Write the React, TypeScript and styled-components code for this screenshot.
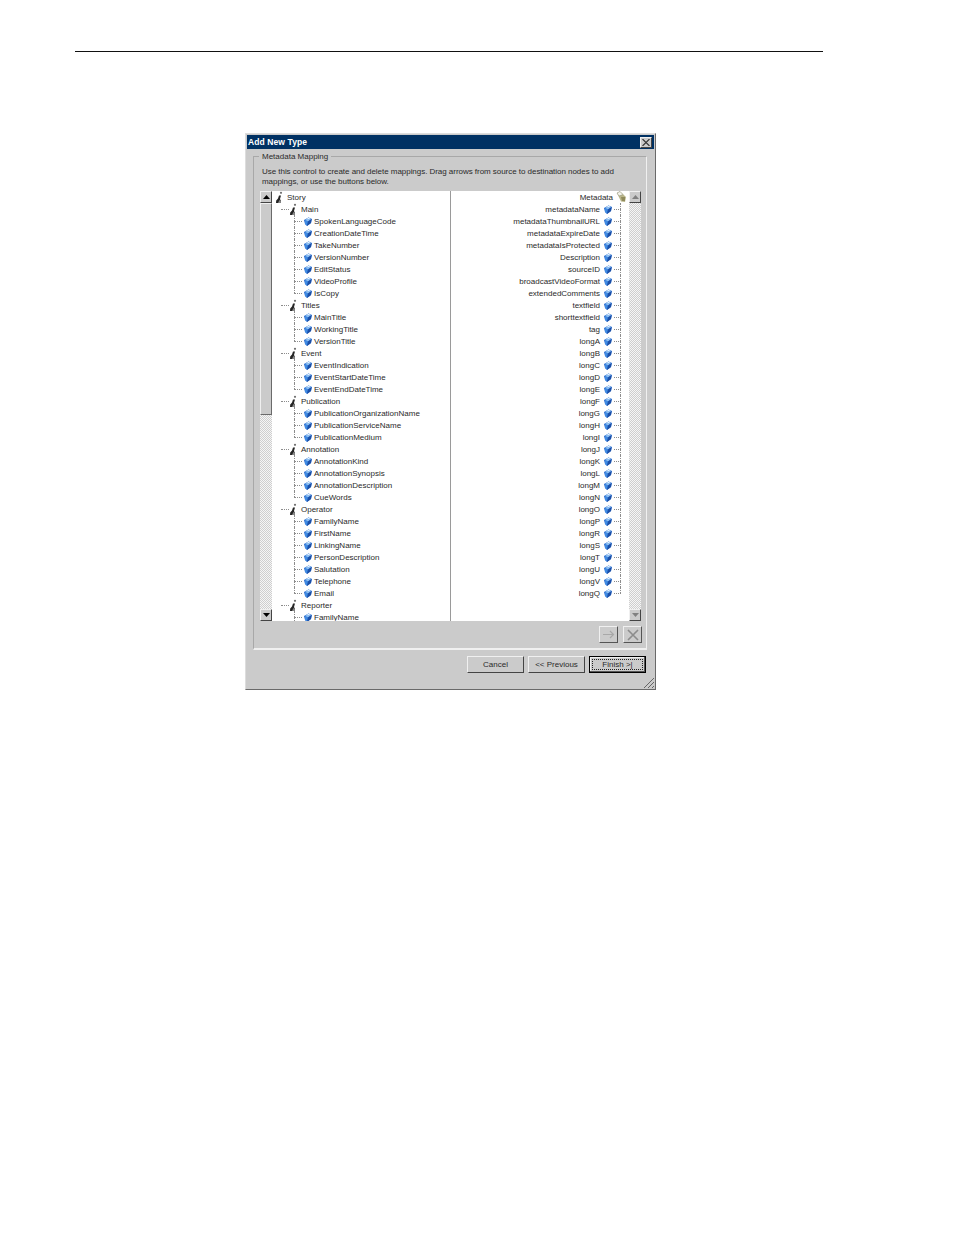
import styled, { createGlobalStyle } from "styled-components";

const GlobalStyle = createGlobalStyle`
  html, body {
    margin: 0;
    padding: 0;
    background: #ffffff;
  }
  body {
    font-family: "Liberation Sans", Arial, sans-serif;
  }
`;

type SourceNode = { label: string; kind: "root" | "group" | "leaf"; last?: boolean };

const group = (label: string, ...children: string[]): SourceNode[] => [
  { label, kind: "group" },
  ...children.map((c, i) => ({
    label: c,
    kind: "leaf" as const,
    last: i === children.length - 1,
  })),
];

const sourceNodes: SourceNode[] = [
  { label: "Story", kind: "root" },
  ...group(
    "Main",
    "SpokenLanguageCode",
    "CreationDateTime",
    "TakeNumber",
    "VersionNumber",
    "EditStatus",
    "VideoProfile",
    "IsCopy",
  ),
  ...group("Titles", "MainTitle", "WorkingTitle", "VersionTitle"),
  ...group("Event", "EventIndication", "EventStartDateTime", "EventEndDateTime"),
  ...group(
    "Publication",
    "PublicationOrganizationName",
    "PublicationServiceName",
    "PublicationMedium",
  ),
  ...group(
    "Annotation",
    "AnnotationKind",
    "AnnotationSynopsis",
    "AnnotationDescription",
    "CueWords",
  ),
  ...group(
    "Operator",
    "FamilyName",
    "FirstName",
    "LinkingName",
    "PersonDescription",
    "Salutation",
    "Telephone",
    "Email",
  ),
  { label: "Reporter", kind: "group" },
  { label: "FamilyName", kind: "leaf" },
];

const targetNodes = [
  "metadataName",
  "metadataThumbnailURL",
  "metadataExpireDate",
  "metadataIsProtected",
  "Description",
  "sourceID",
  "broadcastVideoFormat",
  "extendedComments",
  "textfield",
  "shorttextfield",
  "tag",
  "longA",
  "longB",
  "longC",
  "longD",
  "longE",
  "longF",
  "longG",
  "longH",
  "longI",
  "longJ",
  "longK",
  "longL",
  "longM",
  "longN",
  "longO",
  "longP",
  "longR",
  "longS",
  "longT",
  "longU",
  "longV",
  "longQ",
];

function GemIcon() {
  return (
    <GemSvg viewBox="0 0 8 9" width="8" height="9">
      <polygon points="4.5,0.5 8,2 7,6 3,9 1,7 0,3" fill="#2467cc" />
      <polygon points="4.5,0.5 7.5,2 4,4.5 1,3" fill="#8dbef0" />
      <polygon points="1,3 4,4.5 3,8.5 1,7" fill="#3f8ae2" />
      <polygon points="7,6 3,9 4,4.5 7.5,2" fill="#1c4fa6" />
      <rect x="3.5" y="1" width="2" height="1" fill="#eaf4ff" />
    </GemSvg>
  );
}

function PersonIcon() {
  return (
    <PersonSvg viewBox="0 0 9 13" width="9" height="13">
      <circle cx="6" cy="1.8" r="1.1" fill="#6f6f6f" />
      <path d="M4 4.5 L6 4.5 L5 8 L6 10 L5.5 12 L1 12 L1.2 9.5 L3 7.5 Z" fill="#262626" />
      <path d="M4.5 9 L6 10 L5.5 12 L3 12 Z" fill="#8a8a8a" />
    </PersonSvg>
  );
}

function TagIcon() {
  return (
    <TagSvg viewBox="0 0 11 12" width="11" height="12">
      <path d="M1 2 L4 0.5 L10 6 L9 11 L5 10.5 Z" fill="#b9b58a" />
      <path d="M1 2 L4 0.5 L7 3.5 L3 5 Z" fill="#f4f4ec" stroke="#8a8a70" strokeWidth="0.5" />
      <path d="M5 6 L9 6 L9 10 L6 10 Z" fill="#8f8a5c" />
    </TagSvg>
  );
}

function ArrowUp({ disabled }: { disabled?: boolean }) {
  return (
    <svg viewBox="0 0 7 4" width="7" height="4">
      <polygon points="3.5,0 7,4 0,4" fill={disabled ? "#808080" : "#000000"} />
    </svg>
  );
}

function ArrowDown({ disabled }: { disabled?: boolean }) {
  return (
    <svg viewBox="0 0 7 4" width="7" height="4">
      <polygon points="0,0 7,0 3.5,4" fill={disabled ? "#808080" : "#000000"} />
    </svg>
  );
}

export default function App() {
  return (
    <Page>
      <GlobalStyle />
      <HeaderRule />
      <Dialog>
        <TitleBar>
          <TitleText>Add New Type</TitleText>
          <CloseButton>
            <svg viewBox="0 0 8 7" width="8" height="7">
              <path d="M0.5 0 L7.5 7 M7.5 0 L0.5 7" stroke="#333" strokeWidth="1.1" />
            </svg>
          </CloseButton>
        </TitleBar>
        <GroupBox>
          <GroupLegend>Metadata Mapping</GroupLegend>
          <Description>
            Use this control to create and delete mappings. Drag arrows from source to
            destination nodes to add mappings, or use the buttons below.
          </Description>
          <MappingPanel>
            <ScrollBar>
              <ScrollButton>
                <ArrowUp />
              </ScrollButton>
              <ScrollThumb />
              <ScrollTrack />
              <ScrollButton>
                <ArrowDown />
              </ScrollButton>
            </ScrollBar>
            <SourcePane>
              {sourceNodes.map((node, i) => (
                <SourceRow key={i} $kind={node.kind}>
                  {node.kind === "group" && <GroupDash />}
                  {node.kind === "leaf" && <LeafBranch $last={node.last} />}
                  {node.kind === "leaf" ? <GemIcon /> : <PersonIcon />}
                  <NodeLabel $kind={node.kind}>{node.label}</NodeLabel>
                </SourceRow>
              ))}
            </SourcePane>
            <PaneDivider />
            <TargetPane>
              <TargetRootRow>
                <NodeLabel $kind="root">Metadata</NodeLabel>
                <TagIcon />
              </TargetRootRow>
              {targetNodes.map((name, i) => (
                <TargetRow key={name}>
                  <NodeLabel $kind="leaf">{name}</NodeLabel>
                  <GemIcon />
                  <TargetBranch $last={i === targetNodes.length - 1} />
                </TargetRow>
              ))}
            </TargetPane>
            <ScrollBar>
              <ScrollButton>
                <ArrowUp disabled />
              </ScrollButton>
              <ScrollTrack />
              <ScrollButton>
                <ArrowDown disabled />
              </ScrollButton>
            </ScrollBar>
          </MappingPanel>
          <IconButtons>
            <IconButton>
              <svg viewBox="0 0 12 9" width="12" height="9">
                <path
                  d="M0 4.5 H10 M7 1 L10.5 4.5 L7 8"
                  stroke="#a8a8a8"
                  strokeWidth="1.2"
                  fill="none"
                />
              </svg>
            </IconButton>
            <IconButton>
              <svg viewBox="0 0 12 12" width="12" height="12">
                <path d="M1 1 L11 11 M11 1 L1 11" stroke="#8c8c8c" strokeWidth="1.6" />
              </svg>
            </IconButton>
          </IconButtons>
        </GroupBox>
        <Footer>
          <PushButton>Cancel</PushButton>
          <PushButton>&lt;&lt; Previous</PushButton>
          <DefaultButton>
            <FocusRing>Finish &gt;|</FocusRing>
          </DefaultButton>
        </Footer>
        <ResizeGrip viewBox="0 0 10 10" width="10" height="10">
          <path d="M0 10 L10 0 M4 10 L10 4 M8 10 L10 8" stroke="#666" strokeWidth="1" />
        </ResizeGrip>
      </Dialog>
    </Page>
  );
}

const Page = styled.div`
  width: 954px;
  height: 1235px;
  overflow: hidden;
  padding-top: 51px;
  box-sizing: border-box;
`;

const HeaderRule = styled.div`
  width: 748px;
  height: 1px;
  margin-left: 75px;
  background: #111111;
`;

const Dialog = styled.div`
  position: relative;
  display: flex;
  flex-direction: column;
  box-sizing: border-box;
  width: 411px;
  height: 557px;
  margin: 81px 0 0 245px;
  padding: 1px 1px 0 1px;
  background: #cbcbcb;
  border-top: 1px solid #dddddd;
  border-left: 1px solid #dddddd;
  border-right: 1px solid #6a6a6a;
  border-bottom: 1px solid #6a6a6a;
`;

const TitleBar = styled.div`
  display: flex;
  align-items: center;
  justify-content: space-between;
  height: 14px;
  flex: none;
  padding: 0 2px 0 1px;
  background: #003163;
`;

const TitleText = styled.span`
  font-size: 8.5px;
  font-weight: 700;
  color: #ffffff;
  letter-spacing: 0.1px;
`;

const CloseButton = styled.span`
  display: flex;
  align-items: center;
  justify-content: center;
  box-sizing: border-box;
  width: 12px;
  height: 11px;
  background: #cbcbcb;
  border: 1px solid;
  border-color: #f0f0f0 #444444 #444444 #f0f0f0;
`;

const GroupBox = styled.div`
  position: relative;
  flex: none;
  box-sizing: border-box;
  width: 394px;
  height: 494px;
  margin: 7px 0 0 6px;
  padding: 9px 5px 0 5px;
  border-top: 1px solid #a8a8a8;
  border-left: 1px solid #a8a8a8;
  border-right: 1px solid #f0f0f0;
  border-bottom: 2px solid #f0f0f0;
`;

const GroupLegend = styled.span`
  position: absolute;
  top: -6px;
  left: 5px;
  padding: 0 3px;
  background: #cbcbcb;
  font-size: 8px;
  line-height: 11px;
  color: #2a2a2a;
`;

const Description = styled.div`
  box-sizing: border-box;
  height: 25px;
  width: 361px;
  padding: 1px 0 0 3px;
  font-size: 8px;
  line-height: 10px;
  letter-spacing: -0.04px;
  color: #2a2a2a;
`;

const MappingPanel = styled.div`
  display: flex;
  width: 381px;
  height: 430px;
  margin-left: 1px;
  background: #ffffff;
  overflow: hidden;
`;

const ScrollBar = styled.div`
  display: flex;
  flex-direction: column;
  flex: none;
  width: 12px;
  height: 430px;
`;

const ScrollButton = styled.div`
  display: flex;
  align-items: center;
  justify-content: center;
  flex: none;
  box-sizing: border-box;
  height: 12px;
  background: #cbcbcb;
  border: 1px solid;
  border-color: #f0f0f0 #444444 #444444 #f0f0f0;
`;

const ScrollThumb = styled.div`
  flex: none;
  box-sizing: border-box;
  height: 212px;
  background: #cbcbcb;
  border: 1px solid;
  border-color: #f0f0f0 #6a6a6a #6a6a6a #f0f0f0;
`;

const ScrollTrack = styled.div`
  flex: 1;
  background-color: #e8e8e8;
  background-image: repeating-conic-gradient(#cfcfcf 0% 25%, #f6f6f6 0% 50%);
  background-size: 2px 2px;
`;

const SourcePane = styled.div`
  flex: none;
  width: 178px;
  height: 430px;
  overflow: hidden;
`;

const PaneDivider = styled.div`
  flex: none;
  width: 1px;
  background: #9a9a9a;
`;

const TargetPane = styled.div`
  flex: 1;
  min-width: 0;
  height: 430px;
  overflow: visible;
`;

const paddings = { root: 3, group: 9, leaf: 22 };

const SourceRow = styled.div<{ $kind: "root" | "group" | "leaf" }>`
  display: flex;
  align-items: center;
  height: 12px;
  padding-left: ${(p) => paddings[p.$kind]}px;
  white-space: nowrap;
`;

const GroupDash = styled.span`
  flex: none;
  width: 8px;
  border-top: 1px dotted #8c8c8c;
`;

const LeafBranch = styled.span<{ $last?: boolean }>`
  position: relative;
  flex: none;
  width: 10px;
  height: 12px;

  &::before {
    content: "";
    position: absolute;
    left: 0;
    top: 0;
    bottom: ${(p) => (p.$last ? "6px" : "0")};
    border-left: 1px dotted #8c8c8c;
  }

  &::after {
    content: "";
    position: absolute;
    left: 0;
    width: 8px;
    top: 6px;
    border-top: 1px dotted #8c8c8c;
  }
`;

const NodeLabel = styled.span<{ $kind: "root" | "group" | "leaf" }>`
  margin-left: ${(p) => (p.$kind === "leaf" ? 2 : 3)}px;
  margin-top: 2px;
  font-size: 8px;
  line-height: 12px;
  color: #2a2a2a;
  white-space: nowrap;
`;

const GemSvg = styled.svg`
  flex: none;
  display: block;
`;

const PersonSvg = styled.svg`
  flex: none;
  display: block;
`;

const TagSvg = styled.svg`
  flex: none;
  display: block;
  margin-left: 3px;
  margin-right: -6px;
`;

const TargetRow = styled.div`
  display: flex;
  align-items: center;
  justify-content: flex-end;
  height: 12px;
  padding-right: 9px;
  white-space: nowrap;

  ${NodeLabel} {
    margin: 2px 4px 0 0;
  }
`;

const TargetRootRow = styled(TargetRow)`
  padding-right: 8px;

  ${NodeLabel} {
    margin: 2px 0 0 0;
  }
`;

const TargetBranch = styled.span<{ $last?: boolean }>`
  position: relative;
  flex: none;
  width: 12px;
  height: 12px;
  margin-right: -4px;

  &::before {
    content: "";
    position: absolute;
    right: 3px;
    top: 0;
    bottom: ${(p) => (p.$last ? "6px" : "0")};
    border-left: 1px dotted #8c8c8c;
  }

  &::after {
    content: "";
    position: absolute;
    left: 2px;
    right: 3px;
    top: 6px;
    border-top: 1px dotted #8c8c8c;
  }
`;

const IconButtons = styled.div`
  display: flex;
  justify-content: flex-end;
  gap: 5px;
  width: 383px;
  margin-top: 5px;
`;

const IconButton = styled.div`
  display: flex;
  align-items: center;
  justify-content: center;
  box-sizing: border-box;
  width: 19px;
  height: 17px;
  background: #cbcbcb;
  border: 1px solid;
  border-color: #f0f0f0 #555555 #555555 #f0f0f0;
`;

const Footer = styled.div`
  display: flex;
  gap: 4px;
  padding-left: 220px;
  margin-top: 6px;
`;

const PushButton = styled.div`
  display: flex;
  align-items: center;
  justify-content: center;
  box-sizing: border-box;
  width: 57px;
  height: 17px;
  background: #cbcbcb;
  border: 1px solid;
  border-color: #f0f0f0 #444444 #444444 #f0f0f0;
  font-size: 8px;
  color: #2a2a2a;
`;

const DefaultButton = styled(PushButton)`
  border: 1px solid #000000;
  box-shadow: inset -1px -1px 0 #555555, inset 1px 1px 0 #f0f0f0;
`;

const FocusRing = styled.span`
  display: flex;
  align-items: center;
  justify-content: center;
  width: 49px;
  height: 9px;
  border: 1px dotted #222222;
`;

const ResizeGrip = styled.svg`
  position: absolute;
  right: 1px;
  bottom: 1px;
`;
